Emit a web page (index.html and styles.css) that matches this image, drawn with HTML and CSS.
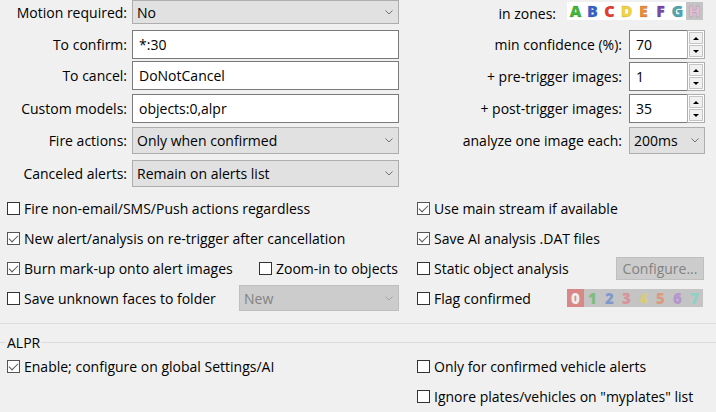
FILE: index.html
```html
<!DOCTYPE html>
<html lang="en">
<head>
  <meta charset="UTF-8">
  <title>Camera AI settings</title>
  <link rel="stylesheet" href="styles.css">
</head>
<body>
  <div class="top">
    <div class="fields">
      <div class="lbl first">Motion required:</div>
      <div class="combo first"><span>No</span><svg class="chev" width="8" height="5"><polyline points="0.5,0.5 4,4 7.5,0.5"/></svg></div>

      <div class="lbl">To confirm:</div>
      <div class="text">*:30</div>

      <div class="lbl">To cancel:</div>
      <div class="text">DoNotCancel</div>

      <div class="lbl">Custom models:</div>
      <div class="text">objects:0,alpr</div>

      <div class="lbl short">Fire actions:</div>
      <div class="combo"><span>Only when confirmed</span><svg class="chev" width="8" height="5"><polyline points="0.5,0.5 4,4 7.5,0.5"/></svg></div>

      <div class="lbl short">Canceled alerts:</div>
      <div class="combo"><span>Remain on alerts list</span><svg class="chev" width="8" height="5"><polyline points="0.5,0.5 4,4 7.5,0.5"/></svg></div>
    </div>

    <div class="side">
      <div class="zones-row">
        <span class="zl">in zones:</span>
        <div class="zones">
          <span class="z-a">A</span><span class="z-b">B</span><span class="z-c">C</span><span class="z-d">D</span><span class="z-e">E</span><span class="z-f">F</span><span class="z-g">G</span><span class="z-h">H</span>
        </div>
      </div>
      <div class="side-grid">
        <div class="lbl">min confidence (%):</div>
        <div class="spin"><div class="val">70</div><div class="btns"><div class="b up"></div><div class="b down"></div></div></div>

        <div class="lbl">+ pre-trigger images:</div>
        <div class="spin"><div class="val">1</div><div class="btns"><div class="b up"></div><div class="b down"></div></div></div>

        <div class="lbl">+ post-trigger images:</div>
        <div class="spin"><div class="val">35</div><div class="btns"><div class="b up"></div><div class="b down"></div></div></div>

        <div class="lbl short">analyze one image each:</div>
        <div class="combo"><span>200ms</span><svg class="chev" width="8" height="5"><polyline points="0.5,0.5 4,4 7.5,0.5"/></svg></div>
      </div>
    </div>
  </div>

  <div class="checks">
    <div class="cell-l"><label class="chk"><span class="box"></span>Fire non-email/SMS/Push actions regardless</label></div>
    <div class="cell-r"><label class="chk"><span class="box on"></span>Use main stream if available</label></div>

    <div class="cell-l"><label class="chk"><span class="box on"></span>New alert/analysis on re-trigger after cancellation</label></div>
    <div class="cell-r"><label class="chk"><span class="box on"></span>Save AI analysis .DAT files</label></div>

    <div class="cell-l pair zoom">
      <label class="chk"><span class="box on"></span>Burn mark-up onto alert images</label>
      <label class="chk"><span class="box"></span>Zoom-in to objects</label>
    </div>
    <div class="cell-r pair static">
      <label class="chk"><span class="box"></span>Static object analysis</label>
      <div class="btn disabled">Configure...</div>
    </div>

    <div class="cell-l pair faces">
      <label class="chk"><span class="box"></span>Save unknown faces to folder</label>
      <div class="combo disabled"><span>New</span><svg class="chev" width="8" height="5"><polyline points="0.5,0.5 4,4 7.5,0.5"/></svg></div>
    </div>
    <div class="cell-r pair flag">
      <label class="chk"><span class="box"></span>Flag confirmed</label>
      <div class="digits">
        <span class="d0">0</span><span class="d1">1</span><span class="d2">2</span><span class="d3">3</span><span class="d4">4</span><span class="d5">5</span><span class="d6">6</span><span class="d7">7</span>
      </div>
    </div>
  </div>

  <hr class="sep">

  <div class="group-title"><span>ALPR</span></div>
  <div class="group">
    <div class="cell-l"><label class="chk"><span class="box on"></span>Enable; configure on global Settings/AI</label></div>
    <div class="cell-r"><label class="chk"><span class="box"></span>Only for confirmed vehicle alerts</label></div>
    <div class="cell-l"></div>
    <div class="cell-r"><label class="chk"><span class="box"></span>Ignore plates/vehicles on "myplates" list</label></div>
  </div>
</body>
</html>
```

FILE: styles.css
```css
* { box-sizing: border-box; margin: 0; padding: 0; }
html, body {
  height: 100%;
  overflow: hidden;
}
body {
  font-family: 'Open Sans', 'Noto Sans', sans-serif;
  font-size: 14px;
  background: #f0f0f0;
  color: #000;
}

/* top block: labels + inputs */
.top {
  display: flex;
  align-items: flex-start;
  height: 193px;
}
.fields {
  width: 400px;
  display: grid;
  grid-template-columns: 127px 267px;
  grid-template-rows: 30px 31px 33px 33px 33px 33px;
  column-gap: 5px;
  align-items: start;
}
.lbl {
  display: flex;
  align-items: center;
  justify-content: flex-end;
  height: 29px;
  white-space: nowrap;
}
.lbl.short { height: 27px; }
.lbl.first { height: 24px; }

.combo {
  height: 27px;
  display: flex;
  align-items: center;
  justify-content: space-between;
  background: #e1e1e1;
  border: 1px solid #adadad;
  padding: 0 5px 0 4px;
}
.combo.first { height: 24px; }
.chev { fill: none; stroke: #707070; stroke-width: 1; }
.combo.disabled {
  height: 26px;
  background: #cccccc;
  border-color: #bfbfbf;
  color: #838383;
}
.combo.disabled .chev { stroke: #a6a6a6; }

.text {
  height: 29px;
  background: #fff;
  border: 1px solid #7a7a7a;
  padding-left: 6px;
  display: flex;
  align-items: center;
}

/* right side */
.side { flex: 1; }
.zones-row {
  height: 30px;
  display: flex;
  justify-content: flex-end;
  align-items: flex-start;
  gap: 11px;
  padding: 2px 13px 0 0;
}
.zl { line-height: 17px; padding-top: 3px; }
.zones {
  display: flex;
  height: 18px;
  background: #fff;
}
.zones span {
  width: 17px;
  height: 18px;
  text-align: center;
  font: 800 16px/18px 'Open Sans', sans-serif;
  -webkit-text-stroke: 0.4px rgba(0, 0, 0, 0.25);
}
.z-a { color: #3fb53a; }
.z-b { color: #3464c8; }
.z-c { color: #e53a2e; }
.z-d { color: #f4d43c; }
.z-e { color: #ef8a3a; }
.z-f { color: #7a48a8; }
.z-g { color: #4aa8b0; }
.zones .z-h { color: #e2bcd6; background: #c4c4c4; }

.side-grid {
  display: grid;
  grid-template-columns: 1fr 76px;
  grid-template-rows: 32px 32px 33px 33px;
  column-gap: 7px;
  padding-right: 11px;
  align-items: start;
}

.spin {
  display: flex;
  height: 29px;
}
.spin .val {
  flex: 1;
  background: #fff;
  border: 1px solid #7a7a7a;
  border-right: 0;
  padding-left: 6px;
  display: flex;
  align-items: center;
}
.spin .btns {
  width: 18px;
  display: flex;
  flex-direction: column;
  gap: 1px;
  padding: 1px;
  background: #fff;
  border: 1px solid #adadad;
}
.spin .b {
  flex: 1;
  display: flex;
  align-items: center;
  justify-content: center;
  background: #f0f0f0;
  border: 1px solid #c4c4c4;
}
.spin .b::before {
  content: '';
  border-left: 3px solid transparent;
  border-right: 3px solid transparent;
}
.spin .up::before { border-bottom: 3px solid #000; }
.spin .down::before { border-top: 3px solid #000; }

/* checkbox rows */
.checks {
  display: grid;
  grid-template-columns: 400px 1fr;
  grid-auto-rows: 30px;
  align-items: center;
}
.cell-l { padding-left: 7px; }
.cell-r { padding-left: 17px; }
.pair {
  display: grid;
  align-items: center;
}
.pair.zoom { grid-template-columns: 252px auto; }
.pair.faces { grid-template-columns: 232px 160px; }
.pair.static { grid-template-columns: 199px 88px; }
.pair.flag { grid-template-columns: 150px 136px; }

.chk {
  display: flex;
  align-items: center;
  gap: 4px;
  white-space: nowrap;
}
.box {
  position: relative;
  width: 13px;
  height: 13px;
  flex-shrink: 0;
  border: 1px solid #333;
  background: #fff;
}
.box.on { border-color: #555; }
.box.on::after {
  content: '';
  position: absolute;
  left: 3px;
  top: 0;
  width: 4px;
  height: 8px;
  border: solid #555;
  border-width: 0 1.5px 1.5px 0;
  transform: rotate(45deg);
}

.btn {
  height: 23px;
  display: flex;
  align-items: center;
  justify-content: center;
  border: 1px solid #adadad;
  background: #e1e1e1;
}
.btn.disabled {
  background: #cccccc;
  border-color: #bfbfbf;
  color: #838383;
}

.digits {
  display: flex;
  height: 18px;
  background: #c4c4c4;
}
.digits span {
  width: 17px;
  height: 18px;
  text-align: center;
  font: 800 15px/18px 'Open Sans', sans-serif;
}
.digits .d0 { background: #d98888; color: #eeeeee; }
.d1 { color: #7fbc7c; }
.d2 { color: #7f9acb; }
.d3 { color: #d9939a; }
.d4 { color: #d8cc7a; }
.d5 { color: #dc9a80; }
.d6 { color: #b496cc; }
.d7 { color: #8ed2c4; }

/* ALPR group */
.sep {
  border: 0;
  border-top: 1px solid #dcdcdc;
  margin-top: 10px;
}
.group-title {
  display: flex;
  align-items: center;
  height: 18px;
  margin-top: 9px;
}
.group-title::before {
  content: '';
  width: 6px;
  border-top: 1px solid #dcdcdc;
}
.group-title::after {
  content: '';
  flex: 1;
  border-top: 1px solid #dcdcdc;
}
.group-title span { padding: 0 1px; }
.group {
  display: grid;
  grid-template-columns: 400px 1fr;
  grid-template-rows: 30px 30px;
  align-items: center;
}
```
